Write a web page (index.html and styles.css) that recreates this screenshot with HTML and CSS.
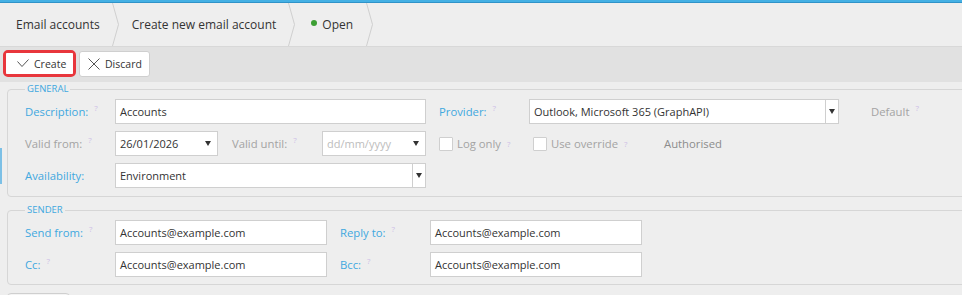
FILE: index.html
```html
<!doctype html>
<html lang="en">
<head>
    <meta charset="UTF-8">
    <title>Create new email account</title>
    <link rel="stylesheet" href="styles.css">
</head>
<body>
<div class="topbar"></div>
<nav class="crumbs">
    <a class="crumb first">Email accounts</a>
    <svg class="sep" width="7" height="43" viewBox="0 0 7 43"><polyline points="0.5,0 6.5,21.5 0.5,43"/></svg>
    <a class="crumb">Create new email account</a>
    <svg class="sep" width="7" height="43" viewBox="0 0 7 43"><polyline points="0.5,0 6.5,21.5 0.5,43"/></svg>
    <a class="crumb status"><span class="dot"></span>Open</a>
    <svg class="sep" width="7" height="43" viewBox="0 0 7 43"><polyline points="0.5,0 6.5,21.5 0.5,43"/></svg>
</nav>
<div class="toolbar">
    <div class="highlight">
        <button class="btn btn-create">
            <svg width="12" height="9" viewBox="0 0 12 9"><polyline points="0.5,2.5 5,7.5 11.5,0.5"/></svg>
            Create
        </button>
    </div>
    <button class="btn btn-discard">
        <svg width="12" height="12" viewBox="0 0 12 12"><path d="M0.5 0.5L11.5 11.5M11.5 0.5L0.5 11.5"/></svg>
        Discard
    </button>
</div>
<div class="side-mark"></div>
<main class="content">
    <fieldset class="group general">
        <legend>General</legend>
        <div class="row">
            <label class="lbl">Description:<sup>?</sup></label>
            <div class="input w-wide">Accounts</div>
            <label class="lbl lbl-next">Provider:<sup>?</sup></label>
            <div class="select w-provider"><span class="val">Outlook, Microsoft 365 (GraphAPI)</span><span class="arrow split"></span></div>
            <span class="plain default">Default<sup>?</sup></span>
        </div>
        <div class="row">
            <label class="lbl muted">Valid from:<sup>?</sup></label>
            <div class="select w-date"><span class="val">26/01/2026</span><span class="arrow"></span></div>
            <label class="lbl lbl-date muted">Valid until:<sup>?</sup></label>
            <div class="select w-date2"><span class="val placeholder">dd/mm/yyyy</span><span class="arrow"></span></div>
            <span class="check log-only"><span class="box"></span>Log only<sup>?</sup></span>
            <span class="check use-override"><span class="box"></span>Use override<sup>?</sup></span>
            <span class="plain authorised">Authorised</span>
        </div>
        <div class="row">
            <label class="lbl">Availability:</label>
            <div class="select w-wide"><span class="val">Environment</span><span class="arrow split"></span></div>
        </div>
    </fieldset>

    <fieldset class="group sender">
        <legend>Sender</legend>
        <div class="row">
            <label class="lbl">Send from:<sup>?</sup></label>
            <div class="input w-mail">Accounts@example.com</div>
            <label class="lbl lbl-next">Reply to:<sup>?</sup></label>
            <div class="input w-mail">Accounts@example.com</div>
        </div>
        <div class="row">
            <label class="lbl">Cc:<sup>?</sup></label>
            <div class="input w-mail">Accounts@example.com</div>
            <label class="lbl lbl-next">Bcc:<sup>?</sup></label>
            <div class="input w-mail">Accounts@example.com</div>
        </div>
    </fieldset>

    <div class="more-btn"></div>
</main>
</body>
</html>
```

FILE: styles.css
```css
* {
    box-sizing: border-box;
}

html,
body {
    margin: 0;
}

body {
    position: relative;
    width: 962px;
    height: 295px;
    overflow: hidden;
    font-family: "Open Sans", "Liberation Sans", sans-serif;
    font-size: 11.3px;
    color: #333;
    background-color: #eeeeee;
}

.topbar {
    height: 3px;
    background-color: #44b0e4;
    border-bottom: 1px solid #2f93c8;
}

/* breadcrumbs */
.crumbs {
    display: flex;
    align-items: center;
    height: 44px;
    border-bottom: 1px solid #d8d8d8;
}

.crumb {
    display: flex;
    align-items: center;
    padding: 0 12px 0 13px;
    font-size: 12px;
    color: #333;
}

.crumb.first {
    padding-left: 16px;
}

.crumb.status {
    padding-left: 16px;
    padding-right: 13px;
}

.dot {
    width: 6px;
    height: 6px;
    margin: 0 5px 4px 0;
    border-radius: 50%;
    background-color: #3c9f33;
}

.sep polyline {
    fill: none;
    stroke: #cfcfcf;
    stroke-width: 1;
}

/* toolbar */
.toolbar {
    display: flex;
    align-items: flex-start;
    gap: 3px;
    height: 35px;
    padding: 3px 0 0 3px;
    background-color: #e1e1e1;
}

.highlight {
    border: 3px solid #e8363c;
    border-radius: 5px;
}

.btn {
    display: flex;
    align-items: center;
    gap: 5px;
    margin: 0;
    font-family: inherit;
    font-size: 10.5px;
    color: #333;
    background-color: #fff;
    cursor: pointer;
}

.btn svg {
    fill: none;
    stroke: #555;
    stroke-width: 1;
}

.btn-create {
    width: 67px;
    height: 21px;
    padding: 0 0 0 11px;
    border: 0;
    border-radius: 1px;
}

.btn-discard {
    height: 26px;
    margin-top: 1px;
    padding: 0 7px 0 8px;
    border: 1px solid #cfcfcf;
    border-radius: 3px;
}

.side-mark {
    position: absolute;
    left: 0;
    top: 148px;
    width: 2px;
    height: 36px;
    background-color: #7cc0e6;
}

/* form */
.content {
    padding-top: 1px;
}

.group {
    margin: 0 -20px 0 7px;
    padding: 0 0 8px 17px;
    border: 1px solid #d6d6d6;
    border-radius: 4px;
}

.group legend {
    padding: 0 2px;
    font-size: 9.5px;
    line-height: 12px;
    text-transform: uppercase;
    color: #41a8df;
}

.general .row:first-of-type {
    margin-top: 4px;
}

.sender {
    margin-top: 7px;
    padding-bottom: 7px;
}

.sender .row:first-of-type {
    margin-top: 4px;
}

.row {
    display: flex;
    align-items: center;
    height: 25px;
    margin-top: 7px;
}

.lbl {
    flex: none;
    width: 90px;
    color: #41a8df;
}

.lbl.muted {
    color: #a3a3a3;
}

.lbl-next {
    margin-left: 13px;
}

.lbl-date {
    margin-left: 14px;
}

sup {
    margin-left: 6px;
    font-size: 8px;
    color: #cdbde6;
    vertical-align: 5px;
    line-height: 0;
}

.input,
.select {
    display: flex;
    align-items: center;
    flex: none;
    height: 25px;
    padding-left: 4px;
    font-size: 11px;
    color: #333;
    background-color: #fff;
    border: 1px solid #cfcfcf;
}

.select .val {
    flex: 1;
}

.placeholder {
    color: #bdbdbd;
}

.arrow {
    display: flex;
    align-items: center;
    justify-content: center;
    width: 18px;
    height: 100%;
}

.arrow::after {
    content: '';
    border-left: 3px solid transparent;
    border-right: 3px solid transparent;
    border-top: 5px solid #333;
}

.arrow.split {
    width: 13px;
    border-left: 1px solid #cfcfcf;
}

.w-wide {
    width: 311px;
}

.w-provider {
    width: 310px;
}

.w-date {
    width: 103px;
}

.w-date2 {
    width: 104px;
}

.w-mail {
    width: 212px;
}

.plain {
    color: #a3a3a3;
}

.default {
    margin-left: 32px;
}

.check {
    display: flex;
    align-items: center;
    flex: none;
    color: #a3a3a3;
}

.box {
    width: 14px;
    height: 14px;
    margin-right: 4px;
    background-color: #fff;
    border: 1px solid #cfcfcf;
    border-radius: 1px;
}

.log-only {
    width: 94px;
    margin-left: 13px;
}

.use-override {
    width: 131px;
}

.authorised {
    color: #8c8c8c;
}

.more-btn {
    width: 63px;
    height: 20px;
    margin: 8px 0 0 7px;
    background-color: #f4f4f4;
    border: 1px solid #cfcfcf;
    border-radius: 4px;
}
```
